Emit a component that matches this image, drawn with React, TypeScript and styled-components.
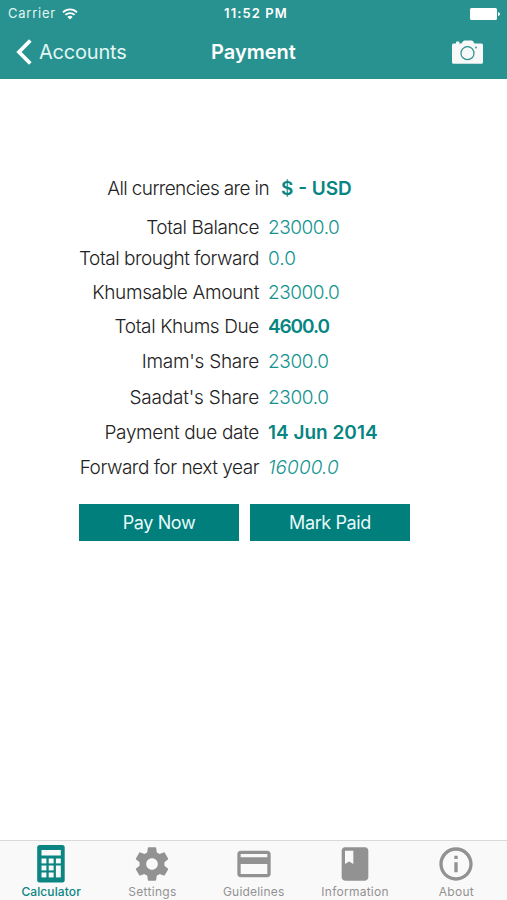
import React from "react";
import styled, { createGlobalStyle } from "styled-components";

const Global = createGlobalStyle`
  * { box-sizing: border-box; }
  html, body { margin: 0; background: #fff; }
  button { border: 0; padding: 0; margin: 0; background: none; font: inherit; color: inherit; }
`;

const Screen = styled.div`
  width: 507px;
  height: 900px;
  display: flex;
  flex-direction: column;
  overflow: hidden;
  background: #fff;
  font-family: Inter, "Liberation Sans", sans-serif;
`;

const Header = styled.header`
  height: 79px;
  flex: none;
  background: #279290;
  color: #fff;
`;

const StatusBar = styled.div`
  height: 27px;
  display: grid;
  grid-template-columns: 1fr auto 1fr;
  align-items: center;
  padding: 0 7px 0 8px;
  font-size: 13px;
  line-height: 27px;
`;

const Carrier = styled.div`
  display: flex;
  align-items: center;
  gap: 6px;
  color: #e2f5f3;
`;

const Label = styled.span<{ $track?: number }>`
  letter-spacing: ${(p) => p.$track ?? 0}px;
  white-space: nowrap;
`;

const Clock = styled.div`
  padding-left: 4px;
  font-weight: 600;
`;

const Battery = styled.div`
  display: flex;
  justify-content: flex-end;
`;

const NavBar = styled.nav`
  height: 52px;
  display: grid;
  grid-template-columns: 1fr auto 1fr;
  align-items: center;
  padding: 0 16px 2px;
`;

const Back = styled.button`
  display: flex;
  align-items: center;
  gap: 7px;
  font-size: 20px;
  color: #e2f6f4;
`;

const Title = styled.h1`
  margin: 0;
  font-size: 20px;
  font-weight: 600;
`;

const CameraButton = styled.button`
  justify-self: end;
  display: flex;
  margin-right: 8px;
`;

const Main = styled.main`
  flex: 1;
  padding: 91px 0 0 79px;
`;

const Row = styled.div<{ $height: number; $labelWidth?: number; $gap?: number }>`
  display: grid;
  grid-template-columns: ${(p) => p.$labelWidth ?? 180}px auto;
  column-gap: ${(p) => p.$gap ?? 9}px;
  justify-content: start;
  align-items: end;
  height: ${(p) => p.$height}px;
  font-size: 19px;
  line-height: 24px;
`;

const Name = styled.span<{ $track: number }>`
  text-align: right;
  white-space: nowrap;
  font-weight: 300;
  color: #222;
  letter-spacing: ${(p) => p.$track}px;
`;

const Value = styled.span<{ $kind: "plain" | "strong" | "italic"; $track: number }>`
  white-space: nowrap;
  font-weight: ${(p) => (p.$kind === "strong" ? 600 : 300)};
  font-style: ${(p) => (p.$kind === "italic" ? "italic" : "normal")};
  color: ${(p) => (p.$kind === "strong" ? "#078582" : "#149490")};
  letter-spacing: ${(p) => p.$track}px;
`;

const Actions = styled.div`
  display: flex;
  gap: 11px;
  margin-top: 24px;
`;

const ActionButton = styled.button`
  width: 160px;
  height: 37px;
  background: #007f7c;
  color: #e9fafa;
  font-size: 18px;
`;

const TabBar = styled.nav`
  height: 60px;
  flex: none;
  display: grid;
  grid-template-columns: repeat(5, 101.3px);
  border-top: 1px solid #d9d9d9;
  background: #f9f9f9;
`;

const Tab = styled.button<{ $active?: boolean }>`
  display: flex;
  flex-direction: column;
  align-items: center;
  padding: 3px 0 0 1px;
  color: ${(p) => (p.$active ? "#0b8582" : "#929292")};
  font-size: 12px;
  font-weight: ${(p) => (p.$active ? 500 : 400)};
  line-height: 14px;
  svg { margin-bottom: 1px; flex: none; }
`;

const gear =
  "M19.43 12.98c.04-.32.07-.64.07-.98s-.03-.66-.07-.98l2.11-1.65c.19-.15.24-.42.12-.64l-2-3.46c-.12-.22-.39-.3-.61-.22l-2.49 1c-.52-.4-1.08-.73-1.69-.98l-.38-2.65C14.46 2.18 14.25 2 14 2h-4c-.25 0-.46.18-.49.42l-.38 2.65c-.61.25-1.17.59-1.69.98l-2.49-1c-.23-.09-.49 0-.61.22l-2 3.46c-.13.22-.07.49.12.64l2.11 1.65c-.04.32-.07.65-.07.98s.03.66.07.98l-2.11 1.65c-.19.15-.24.42-.12.64l2 3.46c.12.22.39.3.61.22l2.49-1c.52.4 1.08.73 1.69.98l.38 2.65c.03.24.24.42.49.42h4c.25 0 .46-.18.49-.42l.38-2.65c.61-.25 1.17-.59 1.69-.98l2.49 1c.23.09.49 0 .61-.22l2-3.46c.12-.22.07-.49-.12-.64l-2.11-1.65zM12 15.5c-1.93 0-3.5-1.57-3.5-3.5s1.57-3.5 3.5-3.5 3.5 1.57 3.5 3.5-1.57 3.5-3.5 3.5z";
const card =
  "M20 4H4c-1.11 0-1.99.89-1.99 2L2 18c0 1.11.89 2 2 2h16c1.11 0 2-.89 2-2V6c0-1.11-.89-2-2-2zm0 14H4v-6h16v6zm0-10H4V6h16v2z";
const book =
  "M18 2H6c-1.1 0-2 .9-2 2v16c0 1.1.9 2 2 2h12c1.1 0 2-.9 2-2V4c0-1.1-.9-2-2-2zM6 4h5v8l-2.5-1.5L6 12V4z";
const info =
  "M11 17h2v-6h-2v6zm1-15C6.48 2 2 6.48 2 12s4.48 10 10 10 10-4.48 10-10S17.52 2 12 2zm0 18c-4.41 0-8-3.59-8-8s3.59-8 8-8 8 3.59 8 8-3.59 8-8 8zM11 9h2V7h-2v2z";

const Glyph = ({ d }: { d: string }) => (
  <svg width="40" height="40" viewBox="0 0 24 24" fill="currentColor">
    <path d={d} />
  </svg>
);

const Calculator = () => (
  <svg width="40" height="40" viewBox="0 0 40 40">
    <rect x="6.2" y="1" width="27.5" height="37.5" rx="2.5" fill="currentColor" />
    <g fill="#f9f9f9">
      <rect x="10.500" y="6" width="19.300" height="5.500" />
      <rect x="10.500" y="14.500" width="4.900" height="4.900" />
      <rect x="17.700" y="14.500" width="4.900" height="4.900" />
      <rect x="24.900" y="14.500" width="4.900" height="4.900" />
      <rect x="10.500" y="21.500" width="4.900" height="4.900" />
      <rect x="17.700" y="21.500" width="4.900" height="4.900" />
      <rect x="24.900" y="21.500" width="4.900" height="11.900" />
      <rect x="10.500" y="28.500" width="4.900" height="4.900" />
      <rect x="17.700" y="28.500" width="4.900" height="4.900" />
    </g>
  </svg>
);

const Wifi = () => (
  <svg width="16" height="12" viewBox="0 0 16 12" fill="none" stroke="#fff" strokeWidth="1.8">
    <path d="M1 4.3a10 10 0 0 1 14 0M3.4 6.9a6.6 6.6 0 0 1 9.2 0" />
    <path d="M5.4 8.9a3.8 3.8 0 0 1 5.2 0L8 11.5z" fill="#fff" stroke="none" />
  </svg>
);

const Camera = () => (
  <svg width="31" height="24" viewBox="0 0 31 24">
    <path
      d="M1.5 3.5H4V2.2q0-.7.7-.7h2q.7 0 .7.7v1.3h1.8L11.4 1q.5-.6 1.3-.6h6.8q.8 0 1.3.6l1.8 2.5h6.9q1.5 0 1.5 1.5v17.2q0 1.5-1.5 1.5h-28Q0 23.700 0 22.200V5q0-1.500 1.500-1.500z"
      fill="#f8f8f8"
    />
    <circle cx="15.500" cy="13.200" r="6.500" fill="none" stroke="#279290" strokeWidth="1.200" />
    <circle cx="24" cy="7.500" r=".9" fill="#279290" />
  </svg>
);

type Kind = "plain" | "strong" | "italic";

// name, value, value style, row height, name tracking, value tracking
const rows: [string, string, Kind, number, number, number][] = [
  ["Total Balance", "23000.0", "plain", 39, -0.42, -0.45],
  ["Total brought forward", "0.0", "plain", 31, -0.48, 0],
  ["Khumsable Amount", "23000.0", "plain", 34, -0.36, -0.45],
  ["Total Khums Due", "4600.0", "strong", 34, -0.38, -1.1],
  ["Imam's Share", "2300.0", "plain", 35, -0.27, -0.35],
  ["Saadat's Share", "2300.0", "plain", 36, -0.2, -0.35],
  ["Payment due date", "14 Jun 2014", "strong", 35, -0.33, 0],
  ["Forward for next year", "16000.0", "italic", 35, -0.47, 0.1],
];

export default function App() {
  return (
    <Screen>
      <Global />
      <Header>
        <StatusBar>
          <Carrier>
            <Label $track={0.75}>Carrier</Label>
            <Wifi />
          </Carrier>
          <Clock><Label $track={1.1}>11:52 PM</Label></Clock>
          <Battery>
            <svg width="30" height="12" viewBox="0 0 30 12" fill="#fff">
              <rect width="27" height="12" rx="1.500" />
              <path d="M28 4q2 .5 2 2t-2 2z" />
            </svg>
          </Battery>
        </StatusBar>
        <NavBar>
          <Back>
            <svg width="16" height="26" viewBox="0 0 16 26" fill="none" stroke="#fff" strokeWidth="3.800">
              <path d="M14.300 1.500 3 13l11.300 11.500" />
            </svg>
            <Label $track={-0.2}>Accounts</Label>
          </Back>
          <Title><Label>Payment</Label></Title>
          <CameraButton aria-label="Camera"><Camera /></CameraButton>
        </NavBar>
      </Header>
      <Main>
        <Row $height={31} $labelWidth={190} $gap={12}>
          <Name $track={-0.62}>All currencies are in</Name>
          <Value $kind="strong" $track={0}>$ - USD</Value>
        </Row>
        {rows.map(([name, value, kind, height, nameTrack, valueTrack]) => (
          <Row key={name} $height={height}>
            <Name $track={nameTrack}>{name}</Name>
            <Value $kind={kind} $track={valueTrack}>{value}</Value>
          </Row>
        ))}
        <Actions>
          <ActionButton><Label $track={-0.4}>Pay Now</Label></ActionButton>
          <ActionButton><Label $track={-0.4}>Mark Paid</Label></ActionButton>
        </Actions>
      </Main>
      <TabBar>
        <Tab $active><Calculator /><Label $track={0.1}>Calculator</Label></Tab>
        <Tab><Glyph d={gear} /><Label $track={0.3}>Settings</Label></Tab>
        <Tab><Glyph d={card} /><Label $track={0.2}>Guidelines</Label></Tab>
        <Tab><Glyph d={book} /><Label $track={0.25}>Information</Label></Tab>
        <Tab><Glyph d={info} /><Label $track={0.3}>About</Label></Tab>
      </TabBar>
    </Screen>
  );
}
